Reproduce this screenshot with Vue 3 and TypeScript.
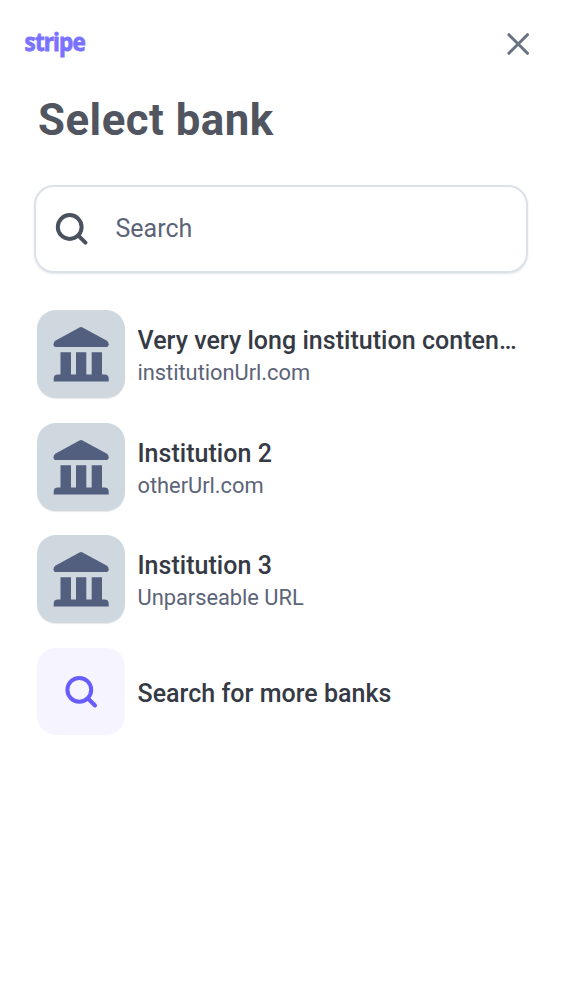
<script setup lang="ts">
interface Institution {
  name: string
  url: string
}

const institutions: Institution[] = [
  { name: 'Very very long institution conten…', url: 'institutionUrl.com' },
  { name: 'Institution 2', url: 'otherUrl.com' },
  { name: 'Institution 3', url: 'Unparseable URL' },
]
</script>

<template>
  <main class="screen">
    <header class="top-bar">
      <svg class="logo" width="64" height="36" viewBox="0 0 64 36" role="img" aria-label="stripe">
        <text x="0.6" y="25.4" textLength="60.2" lengthAdjust="spacingAndGlyphs">stripe</text>
      </svg>
      <button class="close" aria-label="Close">
        <svg width="24" height="24" viewBox="0 0 24 24">
          <path d="M2.9 2.7 21.5 21.3M21.5 2.7 2.9 21.3" />
        </svg>
      </button>
    </header>

    <h1 class="title">Select bank</h1>

    <label class="search">
      <svg class="glass" width="34" height="34" viewBox="0 0 34 34">
        <circle cx="15.7" cy="15" r="11.9" />
        <path d="M24.4 23.7 31.4 30.7" />
      </svg>
      <span class="placeholder">Search</span>
    </label>

    <ul class="list">
      <li v-for="item in institutions" :key="item.name" class="row">
        <span class="tile bank">
          <svg width="88" height="88" viewBox="0 0 88 88">
            <path d="M42.5 17.4Q44 16.6 45.5 17.4L69.5 30.6Q71.7 31.9 71.7 34.2Q71.7 37.1 68.5 37.1H19.5Q16.5 37.1 16.5 34.2Q16.5 31.9 18.7 30.6Z" />
            <path d="M23.5 42.3H34V64.6H39V42.3H49.3V64.6H54.7V42.3H65V64.6H67.5Q71.7 64.6 71.7 68.8V71.5H16.7V68.8Q16.7 64.6 20.9 64.6H23.5Z" />
          </svg>
        </span>
        <span class="labels">
          <span class="name">{{ item.name }}</span>
          <span class="url">{{ item.url }}</span>
        </span>
      </li>
      <li class="row">
        <span class="tile more">
          <svg class="glass" width="34" height="34" viewBox="0 0 34 34">
            <circle cx="15.3" cy="14.8" r="11.9" />
            <path d="M24 23.5 31 30.5" />
          </svg>
        </span>
        <span class="labels"><span class="name">Search for more banks</span></span>
      </li>
    </ul>
  </main>
</template>

<style>
body {
  margin: 0;
  background: #fff;
}
</style>

<style scoped>
.screen {
  box-sizing: border-box;
  width: 562px;
  height: 1000px;
  overflow: hidden;
  background: #fff;
  font-family: Roboto, "Liberation Sans", sans-serif;
}
.top-bar {
  display: flex;
  align-items: center;
  justify-content: space-between;
  height: 87px;
  padding: 0 32px 0 24px;
}
.logo {
  display: block;
  overflow: visible;
}
.logo text {
  font: 700 25px "Open Sans", sans-serif;
  letter-spacing: -1px;
  fill: #7a73ff;
  stroke: #7a73ff;
  stroke-width: 0.8;
}
.close {
  padding: 0;
  border: 0;
  background: none;
}
.close svg {
  display: block;
}
.close path {
  fill: none;
  stroke: #6a7383;
  stroke-width: 3;
  stroke-linecap: round;
}
.title {
  margin: 7px 0 0 38px;
  font-size: 43.75px;
  font-weight: 700;
  line-height: 52px;
  letter-spacing: 0.5px;
  color: #50555f;
}
.search {
  display: flex;
  align-items: center;
  box-sizing: border-box;
  width: 494px;
  height: 88px;
  margin: 39px 0 0 34px;
  padding-left: 18px;
  border: 2px solid #dce0e7;
  border-radius: 20px;
  box-shadow: 0 1px 2px rgba(60, 66, 87, 0.14);
}
.glass {
  display: block;
  flex: none;
  fill: none;
  stroke: #4a515f;
  stroke-width: 4;
}
.glass path {
  stroke-linecap: round;
}
.placeholder {
  margin-left: 27.5px;
  padding-bottom: 2px;
  font-size: 25px;
  color: #5c6478;
}
.list {
  display: flex;
  flex-direction: column;
  gap: 24.5px;
  margin: 37px 0 0 37px;
  padding: 0;
  list-style: none;
}
.row {
  display: flex;
  align-items: center;
  gap: 12.5px;
  height: 88px;
}
.tile {
  display: flex;
  align-items: center;
  justify-content: center;
  flex: none;
  width: 88px;
  height: 88px;
  border-radius: 19px;
}
.bank {
  background: #cfd7df;
  box-shadow: 0 1px 1px rgba(60, 66, 87, 0.13);
}
.bank svg {
  fill: #525f7f;
}
.more {
  height: 87px;
  background: #f6f5ff;
}
.more .glass {
  stroke: #675dff;
}
.labels {
  display: flex;
  flex-direction: column;
  width: 388px;
  padding-top: 5.4px;
}
.name {
  overflow: hidden;
  font-size: 25px;
  font-weight: 500;
  line-height: 32px;
  letter-spacing: 0.03px;
  color: #353a44;
  text-overflow: ellipsis;
  white-space: nowrap;
}
.url {
  font-size: 21.875px;
  line-height: 31px;
  letter-spacing: -0.03px;
  color: #5c6478;
}
</style>
